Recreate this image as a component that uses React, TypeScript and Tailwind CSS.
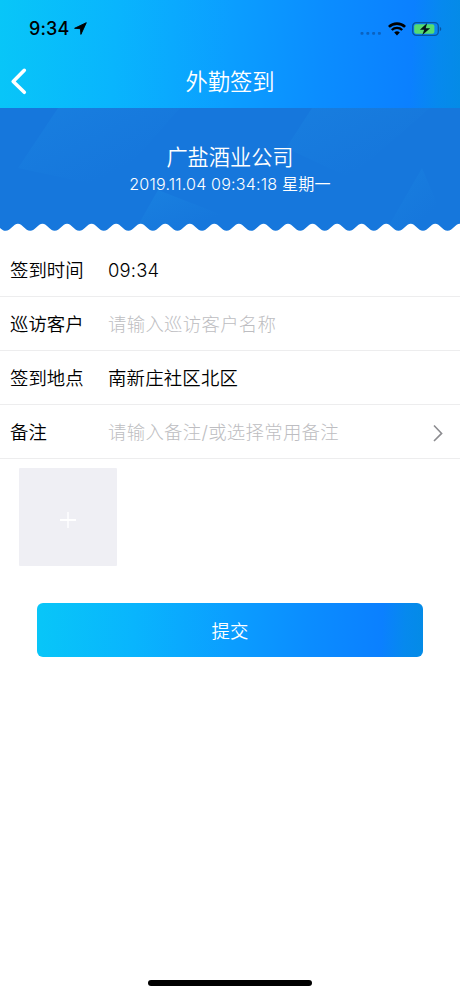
const GRADIENT =
  'bg-[linear-gradient(93deg,#08c6f8_0%,#09b5fd_25%,#0b9eff_50%,#0b8dff_70%,#0b80ff_89%,#0689ee_95%,#048be6_100%)]';

const rows = [
  { label: '签到时间', value: '09:34' },
  { label: '巡访客户', placeholder: '请输入巡访客户名称' },
  { label: '签到地点', value: '南新庄社区北区' },
  { label: '备注', placeholder: '请输入备注/或选择常用备注', arrow: true },
];

// scalloped bottom edge of the banner, one bump every 24.55px
const PERIOD = 24.55;
const START = -18.9;
let wavePath = `M${START} 8.8`;
for (let i = 0; i < 20; i++) {
  const x = START + i * PERIOD;
  wavePath += ` C${x + 5} 8.8 ${x + 7.8} 1.8 ${x + PERIOD / 2} 1.8`;
  wavePath += ` C${x + 16.8} 1.8 ${x + 19.6} 8.8 ${x + PERIOD} 8.8`;
}
wavePath += ` V14 H${START} Z`;

function StatusBar() {
  return (
    <div className="flex h-[54px] items-center justify-between pt-[3px] pr-[18px] pl-[29px] text-black">
      <div className="flex items-center gap-[5px]">
        <span className="text-[18px] leading-6 font-medium tracking-[0.1px]">9:34</span>
        <svg width="13" height="13" viewBox="0 0 13 13" className="-mt-px">
          <path d="M12.3 0.7 L0.6 6.3 L6.4 6.7 L6.9 12.4 Z" fill="currentColor" stroke="currentColor" strokeWidth="0.9" strokeLinejoin="round" />
        </svg>
      </div>
      <div className="flex items-center">
        <svg width="22" height="14" viewBox="0 0 22 14" className="mr-[6px]" fill="#0b62c0">
          <rect x="0.5" y="9.9" width="3" height="2.8" rx="1" />
          <rect x="6.3" y="9.9" width="3" height="2.8" rx="1" />
          <rect x="12.1" y="9.9" width="3" height="2.8" rx="1" />
          <rect x="17.9" y="9.9" width="3" height="2.8" rx="1" />
        </svg>
        <svg width="18" height="14" viewBox="0 0 18 14" className="mr-[6px]" fill="none" stroke="currentColor">
          <path d="M0.9 4.9 A11.6 11.6 0 0 1 17.1 4.9" strokeWidth="2.7" />
          <path d="M3.8 8 A7.4 7.4 0 0 1 14.2 8" strokeWidth="2.4" />
          <path d="M6.2 10.6 A4 4 0 0 1 11.8 10.6 L9 13.4 Z" fill="currentColor" stroke="none" />
        </svg>
        <svg width="30" height="14" viewBox="0 0 30 14">
          <rect x="0.7" y="0.7" width="25.6" height="12.6" rx="3.6" fill="none" stroke="#07549f" strokeWidth="1.3" />
          <rect x="2.2" y="2.2" width="20.2" height="9.6" rx="2" fill="#55db70" />
          <path d="M27.8 4.8 C29.8 5.6 29.8 8.4 27.8 9.2 Z" fill="#07549f" />
          <path d="M15.2 1 L7.9 7.7 H12.2 L10.3 13 L18.2 6.2 H13.7 Z" fill="#03131d" />
        </svg>
      </div>
    </div>
  );
}

function Banner() {
  return (
    <div className="relative h-[126px] overflow-hidden bg-[#1677dc] text-center text-white">
      <svg className="absolute inset-0" width="460" height="126" viewBox="0 0 460 126">
        <defs>
          <linearGradient id="shine" x1="0.1" y1="0" x2="0.75" y2="0.65">
            <stop offset="0" stopColor="#1b86e2" stopOpacity="0.6" />
            <stop offset="1" stopColor="#1b86e2" stopOpacity="0" />
          </linearGradient>
        </defs>
        <path d="M58 0 H180 L110 80 L18 60 Z" fill="url(#shine)" opacity="0.8" />
        <path d="M158 82 L230 110 L240 126 H133 Z" fill="url(#shine)" />
        <path d="M312 0 H430 L350 70 L286 40 Z" fill="url(#shine)" opacity="0.7" />
        <path d="M422 60 L450 126 H384 Z" fill="url(#shine)" opacity="0.8" />
      </svg>
      <div className="relative pt-[34px]">
        <div className="text-[21.2px] leading-[30px] font-[350]">广盐酒业公司</div>
        <div className="pt-px text-[16.1px] leading-[23px] font-[350] tracking-[0.17px]">2019.11.04 09:34:18 星期一</div>
      </div>
      <svg className="absolute bottom-0 left-0" width="460" height="12" viewBox="0 0 460 12">
        <path d={wavePath} fill="#fff" />
      </svg>
    </div>
  );
}

export default function App() {
  return (
    <div className="flex h-[996px] w-[460px] flex-col bg-white font-['Inter','Noto_Sans_CJK_SC',sans-serif]">
      <header className={`h-[108px] shrink-0 ${GRADIENT}`}>
        <StatusBar />
        <div className="flex h-[54px] items-center">
          <div className="w-[60px] pl-[10px]">
            <svg width="18" height="28" viewBox="0 0 18 28" fill="none" stroke="#fff" strokeWidth="3.6" strokeLinecap="round" strokeLinejoin="round">
              <path d="M14.3 3.3 L3.2 14.5 L14.3 25.3" />
            </svg>
          </div>
          <h1 className="flex-1 pt-[2px] text-center text-[22.3px] leading-8 font-[350] text-white">外勤签到</h1>
          <div className="w-[60px]" />
        </div>
      </header>

      <Banner />

      <div className="pt-[9px]">
        {rows.map((row) => (
          <div key={row.label} className="flex h-[54px] items-center border-b border-[#ededee] pt-[2px] pr-[16px] pl-[10px] text-[18.4px] font-[350] text-black">
            <span className="w-[98px]">{row.label}</span>
            {row.value && <span className="flex-1 tracking-[0.2px]">{row.value}</span>}
            {row.placeholder && <span className="flex-1 font-light tracking-[0.3px] text-[#bdbdc1]">{row.placeholder}</span>}
            {row.arrow && (
              <svg width="12" height="18" viewBox="0 0 12 18" fill="none" stroke="#8c8c90" strokeWidth="1.6">
                <path d="M2 1.5 L9.6 9.4 L2 17" />
              </svg>
            )}
          </div>
        ))}
      </div>

      <button className="mt-[9px] ml-[19px] flex h-[98px] w-[98px] shrink-0 items-center justify-center rounded-[1px] bg-[#efeff4] pt-[5px]">
        <svg width="16" height="16" viewBox="0 0 16 16" stroke="#fff">
          <path d="M0 8 H16" strokeWidth="2" />
          <path d="M8 0 V16" strokeWidth="1.4" />
        </svg>
      </button>

      <button className={`mx-[37px] mt-[37px] h-[54px] shrink-0 rounded-[6px] pt-[3px] text-[18.4px] font-[350] text-white ${GRADIENT}`}>
        提交
      </button>

      <div className="mt-auto mb-[10px] h-[6px] w-[164px] self-center rounded-full bg-black" />
    </div>
  );
}
